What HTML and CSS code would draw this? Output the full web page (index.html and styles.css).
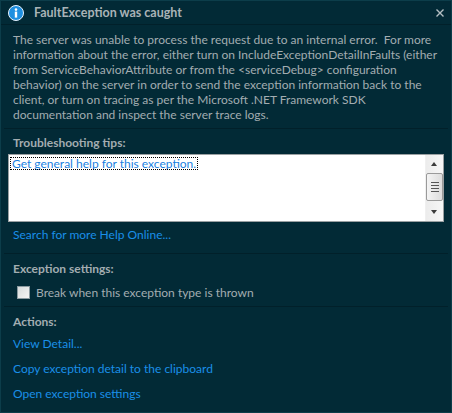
FILE: index.html
```html
<!DOCTYPE html>
<html>
<head>
<meta charset="utf-8">
<link rel="stylesheet" href="styles.css">
</head>
<body>
<div class="win">
  <div class="titlebar">
    <svg class="info" width="16" height="16" viewBox="0 0 16 16">
      <circle cx="8" cy="8" r="7.5" fill="#1f8fe0" stroke="#e8f4ff" stroke-width="1"/>
      <circle cx="8" cy="4.6" r="1.3" fill="#fff"/>
      <rect x="6.8" y="6.6" width="2.4" height="6" fill="#fff"/>
    </svg>
    <span class="title">FaultException was caught</span>
    <svg class="close" width="8" height="8" viewBox="0 0 8 8">
      <path d="M0.5 0.5 L7.5 7.5 M7.5 0.5 L0.5 7.5" stroke="#b4c0c4" stroke-width="1.4"/>
    </svg>
  </div>
  <div class="section msg">
    <p>The server was unable to process the request due to an internal error.&nbsp; For more information about the error, either turn on IncludeExceptionDetailInFaults (either from ServiceBehaviorAttribute or from the &lt;serviceDebug&gt; configuration behavior) on the server in order to send the exception information back to the client, or turn on tracing as per the Microsoft .NET Framework SDK documentation and inspect the server trace logs.</p>
  </div>
  <div class="section tips">
    <div class="head">Troubleshooting tips:</div>
    <div class="listbox">
      <div class="listcontent"><span class="focus">Get general help for this exception.</span></div>
      <div class="scrollbar">
        <div class="arrow up"></div>
        <div class="thumb"><span></span><span></span><span></span><span></span></div>
        <div class="spacer"></div>
        <div class="arrow down"></div>
      </div>
    </div>
    <div class="link search">Search for more Help Online...</div>
  </div>
  <div class="section settings">
    <div class="head">Exception settings:</div>
    <label class="check"><span class="box"></span>Break when this exception type is thrown</label>
  </div>
  <div class="section actions">
    <div class="head">Actions:</div>
    <div class="link">View Detail...</div>
    <div class="link">Copy exception detail to the clipboard</div>
    <div class="link">Open exception settings</div>
  </div>
</div>
</body>
</html>
```
FILE: styles.css
```css
html, body {
  margin: 0;
  padding: 0;
  background: #022a36;
}
.win {
  width: 452px;
  height: 413px;
  box-sizing: border-box;
  border: 1px solid #0c3d4a;
  background: #022a36;
  font-family: "Lato", "Noto Sans", sans-serif;
  font-size: 12px;
  color: #a3adb1;
  overflow: hidden;
}
.titlebar {
  height: 23px;
  display: flex;
  align-items: center;
  padding: 0 7px 0 7px;
  border-bottom: 1px solid #01202a;
}
.info {
  flex: none;
}
.title {
  flex: 1;
  margin-left: 10px;
  font-weight: bold;
  font-size: 12.5px;
  color: #a9b3b7;
}
.close {
  flex: none;
}
.section {
  margin: 0 3px;
  border-bottom: 1px solid #01202a;
}
.section:last-child {
  border-bottom: none;
}
.msg p {
  margin: 0;
  padding: 7px 6px 6px 9px;
  line-height: 15px;
}
.head {
  font-weight: bold;
  padding-left: 9px;
  height: 18px;
  line-height: 18px;
}
.tips .head {
  padding-top: 5px;
}
.listbox {
  margin: 2px 4px 0 4px;
  height: 66px;
  border: 1px solid #9aa0a2;
  background: #fff;
  display: flex;
}
.listcontent {
  flex: 1;
  padding: 1px 0 0 1px;
}
.focus {
  display: inline-block;
  color: #1a7fe0;
  outline: 1px dotted #000;
  outline-offset: -1px;
  padding: 0 2px 0 2px;
  line-height: 13px;
}
.scrollbar {
  width: 17px;
  display: flex;
  flex-direction: column;
  background: linear-gradient(90deg, #ececec, #f6f6f6);
  border-left: 1px solid #f0f0f0;
}
.arrow {
  height: 17px;
  position: relative;
}
.arrow::after {
  content: "";
  position: absolute;
  left: 5px;
  top: 7px;
  border-left: 3.5px solid transparent;
  border-right: 3.5px solid transparent;
}
.arrow.up::after {
  border-bottom: 4px solid #3a3a3a;
}
.arrow.down::after {
  border-top: 4px solid #3a3a3a;
  top: 6px;
}
.thumb {
  margin: 1px 0 0 0;
  height: 28px;
  box-sizing: border-box;
  border: 1px solid #9a9a9a;
  border-radius: 2px;
  background: linear-gradient(90deg, #f4f4f4, #dcdcdc);
  display: flex;
  flex-direction: column;
  justify-content: center;
  align-items: center;
  gap: 2px;
}
.thumb span {
  width: 8px;
  height: 1px;
  background: #555;
}
.spacer {
  flex: 1;
}
.link {
  color: #1a8fe8;
  padding-left: 9px;
  height: 25px;
  line-height: 25px;
}
.search {
  height: 26px;
  line-height: 26px;
  padding-bottom: 5px;
}
.settings .head {
  padding-top: 6px;
}
.check {
  display: flex;
  align-items: center;
  padding-left: 13px;
  height: 28px;
}
.box {
  flex: none;
  width: 11px;
  height: 11px;
  border: 1px solid #8a9aa0;
  background: linear-gradient(135deg, #d8dcdc, #f4f4f4);
  margin-right: 6px;
}
.actions .head {
  padding-top: 6px;
}
```
